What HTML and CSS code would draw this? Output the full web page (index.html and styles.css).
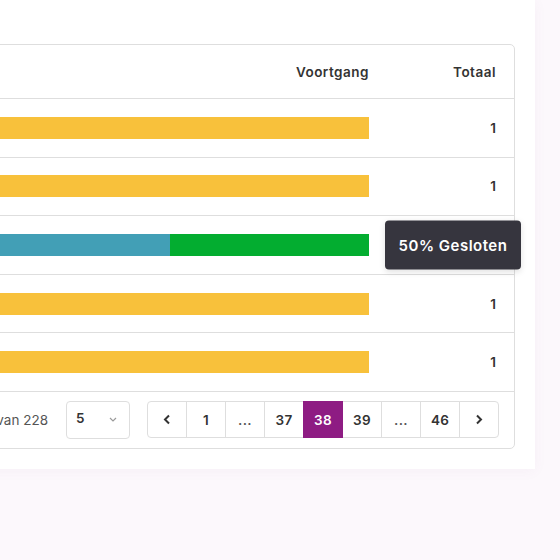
FILE: index.html
```html
<!DOCTYPE html>
<html lang="nl">
<head>
    <meta charset="UTF-8">
    <meta name="viewport" content="width=device-width, initial-scale=1.0">
    <title>Voortgang per categorie</title>
    <link rel="stylesheet" href="styles.css">
</head>
<body>

    <div class="page">
        <div class="card">
            <div class="table-wrap">
                <table class="report">
                    <thead>
                        <tr>
                            <th class="name-col">Categorie</th>
                            <th class="progress-col">Voortgang</th>
                            <th class="total-col">Totaal</th>
                        </tr>
                    </thead>
                    <tbody>
                        <tr>
                            <td class="name-col">Onderhoud</td>
                            <td class="progress-col"><div class="bar"><span class="seg open" style="width: 100%"></span></div></td>
                            <td class="total-col">1</td>
                        </tr>
                        <tr>
                            <td class="name-col">Schoonmaak</td>
                            <td class="progress-col"><div class="bar"><span class="seg open" style="width: 100%"></span></div></td>
                            <td class="total-col">1</td>
                        </tr>
                        <tr>
                            <td class="name-col">Beveiliging</td>
                            <td class="progress-col">
                                <div class="bar">
                                    <span class="seg busy" style="width: 54.2%"></span>
                                    <span class="seg closed" style="width: 45.8%"></span>
                                </div>
                            </td>
                            <td class="total-col">
                                <div class="tooltip">50% Gesloten</div>
                            </td>
                        </tr>
                        <tr>
                            <td class="name-col">Installaties</td>
                            <td class="progress-col"><div class="bar"><span class="seg open" style="width: 100%"></span></div></td>
                            <td class="total-col">1</td>
                        </tr>
                        <tr>
                            <td class="name-col">Terrein</td>
                            <td class="progress-col"><div class="bar"><span class="seg open" style="width: 100%"></span></div></td>
                            <td class="total-col">1</td>
                        </tr>
                    </tbody>
                </table>

                <div class="table-footer">
                    <span class="count">Toont 186 tot 190 van 228</span>
                    <div class="page-size">
                        <span>5</span>
                        <svg width="8" height="5" viewBox="0 0 8 5"><polyline points="1,1 4,4 7,1" fill="none" stroke="#9a9a9a" stroke-width="1.2"/></svg>
                    </div>
                    <nav class="pager">
                        <a class="page-btn">
                            <svg width="8" height="11" viewBox="0 0 8 11"><polyline points="6,1.5 2,5.5 6,9.5" fill="none" stroke="#333" stroke-width="2"/></svg>
                        </a>
                        <a class="page-btn">1</a>
                        <a class="page-btn dots">...</a>
                        <a class="page-btn">37</a>
                        <a class="page-btn active">38</a>
                        <a class="page-btn">39</a>
                        <a class="page-btn dots">...</a>
                        <a class="page-btn">46</a>
                        <a class="page-btn">
                            <svg width="8" height="11" viewBox="0 0 8 11"><polyline points="2,1.5 6,5.5 2,9.5" fill="none" stroke="#333" stroke-width="2"/></svg>
                        </a>
                    </nav>
                </div>
            </div>
        </div>
    </div>

</body>
</html>
```

FILE: styles.css
```css
html, body {
    margin: 0;
    padding: 0;
}

body {
    font-family: Inter, "Open Sans", sans-serif;
    background-color: #fcf8fc;
    color: #333;
    width: 560px;
    height: 560px;
    overflow: hidden;
}

.page {
    margin-left: -300px;
    width: 835px;
}

.card {
    background-color: #fff;
    padding: 44px 20px 20px 0;
    box-shadow: 0 2px 12px rgba(140, 80, 140, 0.05);
}

.table-wrap {
    border: 1px solid #dedede;
    border-radius: 5px;
    background-color: #fff;
}

.report {
    width: 100%;
    border-collapse: collapse;
    table-layout: fixed;
}

.report th {
    height: 53px;
    padding-top: 0;
    padding-bottom: 0;
    font-size: 13.5px;
    font-weight: 600;
    letter-spacing: 0.5px;
    color: #333;
    border-bottom: 1px solid #dedede;
}

.report td {
    height: 57.6px;
    padding-top: 0;
    padding-bottom: 0;
    font-size: 13.5px;
    font-weight: 600;
    border-bottom: 1px solid #dedede;
}

.name-col {
    width: 200px;
    padding-left: 16px;
    text-align: left;
}

.progress-col {
    padding: 0 0 0 16px;
    text-align: right;
}

.total-col {
    width: 127px;
    padding: 0 18px 0 0;
    text-align: right;
    position: relative;
}

.bar {
    display: flex;
    height: 22px;
}

.seg {
    display: block;
    height: 100%;
}

.seg.open {
    background-color: #f8c13b;
}

.seg.busy {
    background-color: #429fb6;
}

.seg.closed {
    background-color: #03ad30;
}

.tooltip {
    position: absolute;
    left: 16px;
    top: 50%;
    transform: translateY(-50%);
    width: 136px;
    height: 49px;
    box-sizing: border-box;
    display: flex;
    align-items: center;
    justify-content: center;
    background-color: #36353e;
    color: #fff;
    font-size: 15px;
    font-weight: 600;
    letter-spacing: 0.5px;
    border-radius: 4px;
    box-shadow: 0 2px 6px rgba(0, 0, 0, 0.12);
    z-index: 2;
}

.table-footer {
    display: flex;
    align-items: center;
    justify-content: flex-end;
    gap: 17px;
    height: 56px;
    padding-right: 15px;
}

.count {
    font-size: 13.5px;
    color: #555;
    margin-right: 1px;
}

.page-size {
    width: 64px;
    height: 38px;
    box-sizing: border-box;
    border: 1px solid #dedede;
    border-radius: 4px;
    display: flex;
    align-items: center;
    justify-content: space-between;
    padding: 0 12px 0 9px;
    font-size: 13.5px;
    font-weight: 600;
}

.page-size span {
    margin-top: -3px;
}

.pager {
    display: flex;
}

.page-btn {
    width: 40px;
    height: 37px;
    box-sizing: border-box;
    border: 1px solid #dedede;
    margin-left: -1px;
    display: flex;
    align-items: center;
    justify-content: center;
    font-size: 13.5px;
    font-weight: 600;
    letter-spacing: 0.3px;
    color: #333;
    background-color: #fff;
}

.page-btn:first-child {
    margin-left: 0;
    border-radius: 4px 0 0 4px;
}

.page-btn:last-child {
    border-radius: 0 4px 4px 0;
}

.page-btn.dots {
    color: #555;
    font-weight: 600;
}

.page-btn.active {
    background-color: #8e1c83;
    border-color: #8e1c83;
    color: #fff;
    position: relative;
}
```
